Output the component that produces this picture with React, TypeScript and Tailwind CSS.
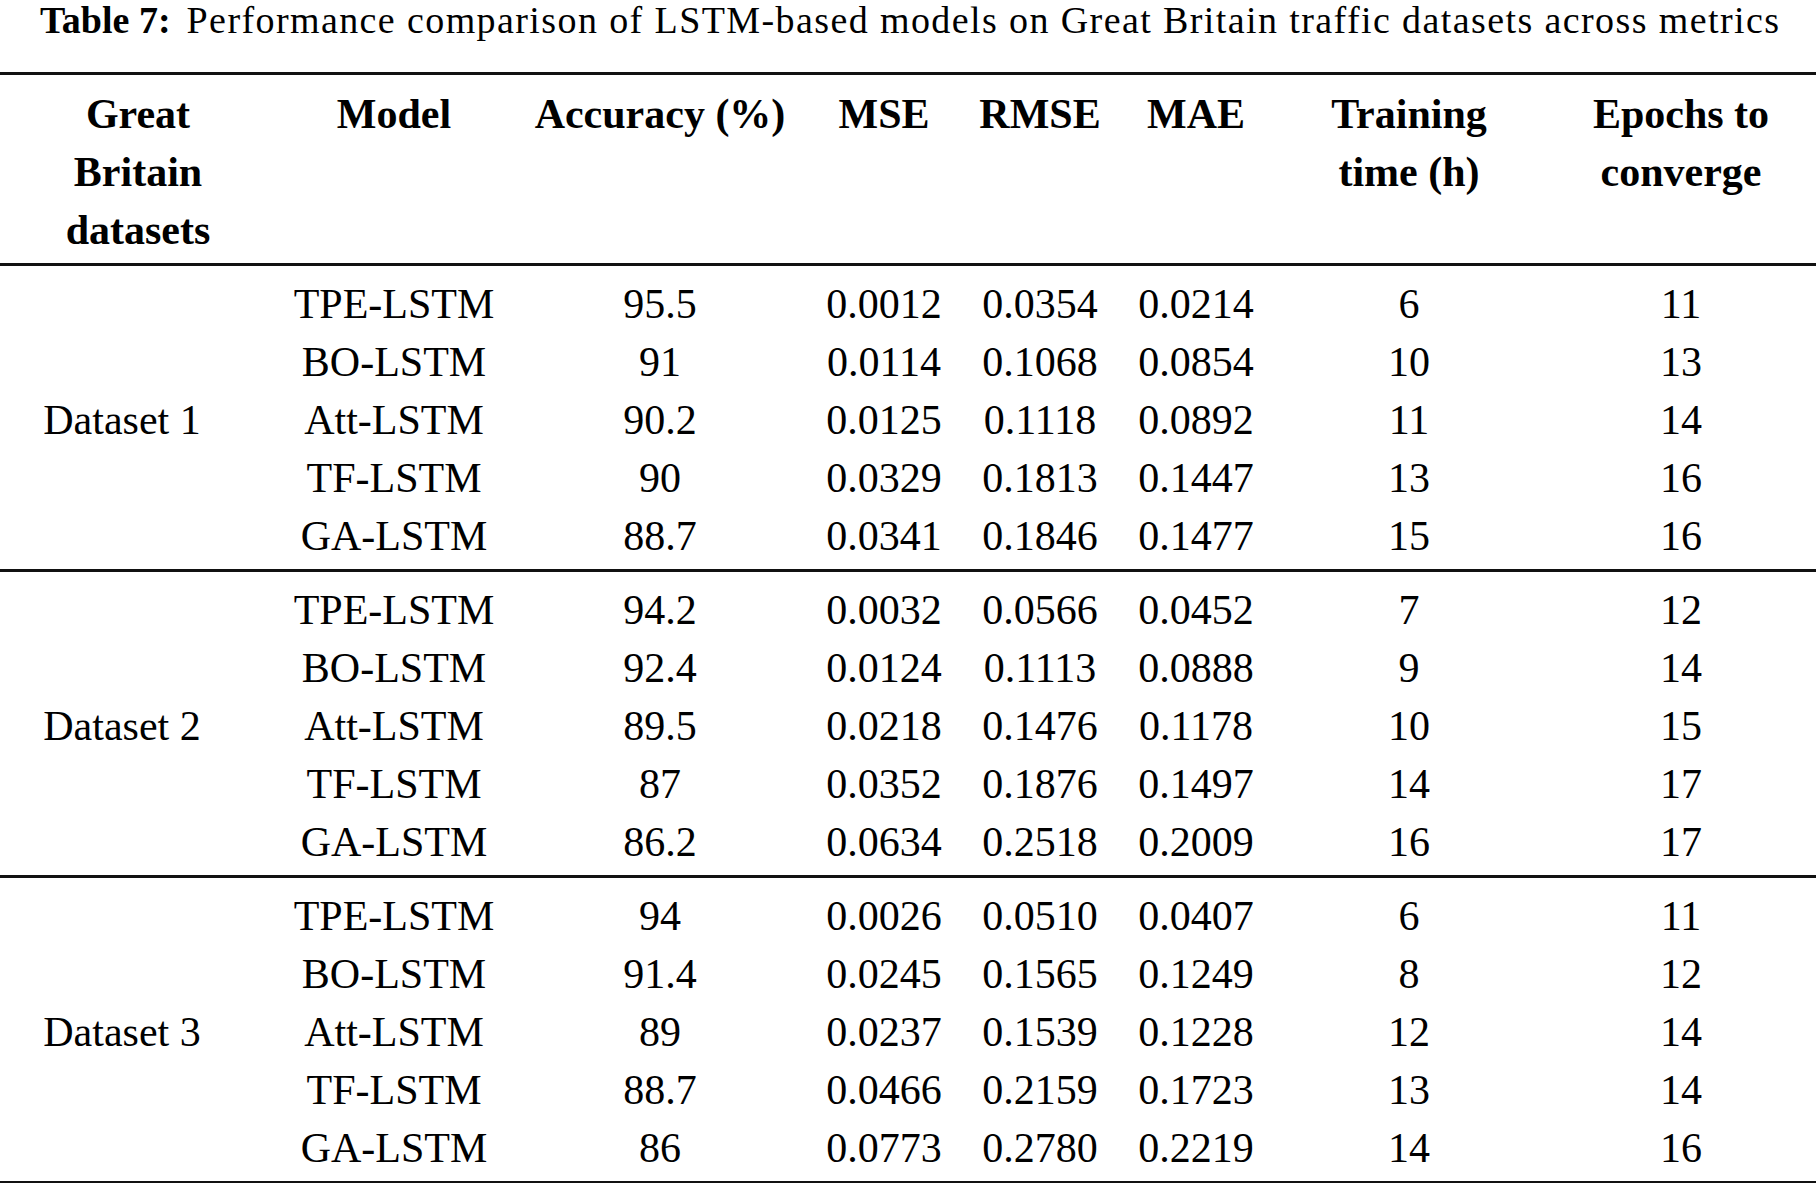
import React from "react";

const cols = "grid grid-cols-[276px_236px_296px_152px_160px_152px_274px_270px]";

type Row = [string, string, string, string, string, string, string];

const groups: { name: string; rows: Row[] }[] = [
  {
    name: "Dataset 1",
    rows: [
      ["TPE-LSTM", "95.5", "0.0012", "0.0354", "0.0214", "6", "11"],
      ["BO-LSTM", "91", "0.0114", "0.1068", "0.0854", "10", "13"],
      ["Att-LSTM", "90.2", "0.0125", "0.1118", "0.0892", "11", "14"],
      ["TF-LSTM", "90", "0.0329", "0.1813", "0.1447", "13", "16"],
      ["GA-LSTM", "88.7", "0.0341", "0.1846", "0.1477", "15", "16"],
    ],
  },
  {
    name: "Dataset 2",
    rows: [
      ["TPE-LSTM", "94.2", "0.0032", "0.0566", "0.0452", "7", "12"],
      ["BO-LSTM", "92.4", "0.0124", "0.1113", "0.0888", "9", "14"],
      ["Att-LSTM", "89.5", "0.0218", "0.1476", "0.1178", "10", "15"],
      ["TF-LSTM", "87", "0.0352", "0.1876", "0.1497", "14", "17"],
      ["GA-LSTM", "86.2", "0.0634", "0.2518", "0.2009", "16", "17"],
    ],
  },
  {
    name: "Dataset 3",
    rows: [
      ["TPE-LSTM", "94", "0.0026", "0.0510", "0.0407", "6", "11"],
      ["BO-LSTM", "91.4", "0.0245", "0.1565", "0.1249", "8", "12"],
      ["Att-LSTM", "89", "0.0237", "0.1539", "0.1228", "12", "14"],
      ["TF-LSTM", "88.7", "0.0466", "0.2159", "0.1723", "13", "14"],
      ["GA-LSTM", "86", "0.0773", "0.2780", "0.2219", "14", "16"],
    ],
  },
];

function Rule() {
  return <div className="h-[3px] w-full bg-[#111]" />;
}

export default function App() {
  return (
    <div className="w-[1816px] h-[1183px] bg-white text-black font-['Liberation_Serif',serif] overflow-hidden">
      <div className="pl-[40px] text-[38px] leading-[38px] pt-[1px] h-[40px] whitespace-nowrap">
        <span className="font-bold">Table 7:</span>
        <span className="ml-[16px] tracking-[1.4px]">
          Performance comparison of LSTM-based models on Great Britain traffic datasets across metrics
        </span>
      </div>
      <div className="mt-[32px]">
        <Rule />
        <div className={`${cols} pt-[10px] pb-[4px] text-[42px] leading-[58px] font-bold text-center`}>
          <div>
            Great
            <br />
            Britain
            <br />
            datasets
          </div>
          <div>Model</div>
          <div className="whitespace-nowrap">Accuracy (%)</div>
          <div>MSE</div>
          <div>RMSE</div>
          <div>MAE</div>
          <div>
            Training
            <br />
            time (h)
          </div>
          <div>
            Epochs to
            <br />
            converge
          </div>
        </div>
        <Rule />
        {groups.map((g) => (
          <div key={g.name}>
            <div className={`${cols} grid-rows-[repeat(5,58px)] pt-[9px] pb-[4px] text-[42px] leading-[58px] text-center`}>
              <div className="row-span-5 flex items-center justify-center pr-[32px] whitespace-nowrap">
                {g.name}
              </div>
              {g.rows.map((r, i) => (
                <React.Fragment key={i}>
                  {r.map((c, j) => (
                    <div key={j} className="whitespace-nowrap">
                      {c}
                    </div>
                  ))}
                </React.Fragment>
              ))}
            </div>
            <Rule />
          </div>
        ))}
      </div>
    </div>
  );
}
